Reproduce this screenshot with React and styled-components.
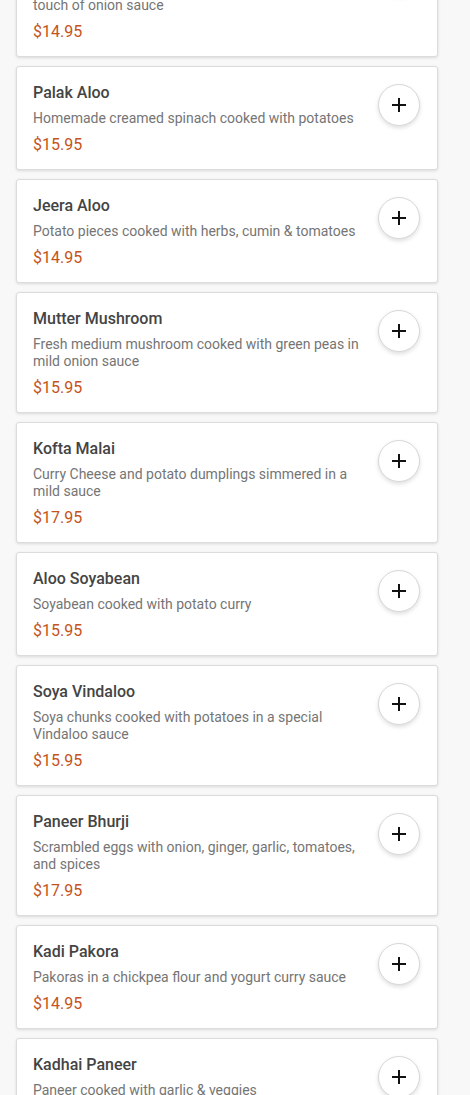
import styled, { createGlobalStyle } from "styled-components";

const GlobalStyle = createGlobalStyle`
  html, body {
    margin: 0;
    padding: 0;
    background: #f8f8f8;
    font-family: Roboto, "Liberation Sans", Arial, sans-serif;
    overflow: hidden;
  }
`;

// platos del menu
const platos = [
  { nombre: "Aloo Gobi", desc: "Cauliflower and potatoes cooked with spices and a touch of onion sauce", precio: "14.95" },
  { nombre: "Palak Aloo", desc: "Homemade creamed spinach cooked with potatoes", precio: "15.95" },
  { nombre: "Jeera Aloo", desc: "Potato pieces cooked with herbs, cumin & tomatoes", precio: "14.95" },
  { nombre: "Mutter Mushroom", desc: "Fresh medium mushroom cooked with green peas in mild onion sauce", precio: "15.95" },
  { nombre: "Kofta Malai", desc: "Curry Cheese and potato dumplings simmered in a mild sauce", precio: "17.95" },
  { nombre: "Aloo Soyabean", desc: "Soyabean cooked with potato curry", precio: "15.95" },
  { nombre: "Soya Vindaloo", desc: "Soya chunks cooked with potatoes in a special Vindaloo sauce", precio: "15.95" },
  { nombre: "Paneer Bhurji", desc: "Scrambled eggs with onion, ginger, garlic, tomatoes, and spices", precio: "17.95" },
  { nombre: "Kadi Pakora", desc: "Pakoras in a chickpea flour and yogurt curry sauce", precio: "14.95" },
  { nombre: "Kadhai Paneer", desc: "Paneer cooked with garlic & veggies", precio: "15.95" },
];

function PlusIcon() {
  return (
    <svg width="16" height="16" viewBox="0 0 16 16">
      <path d="M8 1v14M1 8h14" stroke="#111" strokeWidth="2" fill="none" />
    </svg>
  );
}

export default function App() {
  return (
    <>
      <GlobalStyle />
      <Lista>
        {platos.map((p) => (
          <Card key={p.nombre}>
            <Info>
              <Titulo>{p.nombre}</Titulo>
              <Desc>{p.desc}</Desc>
              <Precio>${p.precio}</Precio>
            </Info>
            <BtnAdd aria-label="add">
              <PlusIcon />
            </BtnAdd>
          </Card>
        ))}
      </Lista>
    </>
  );
}

const Lista = styled.div`
  display: flex;
  flex-direction: column;
  gap: 9px;
  width: 422px;
  margin: -64px 0 0 16px;
`;
const Card = styled.div`
  display: flex;
  align-items: flex-start;
  gap: 16px;
  background: #fff;
  border: 1px solid #dcdcdc;
  border-radius: 3px;
  box-shadow: 0 1px 3px rgba(0, 0, 0, 0.12);
  padding: 16px 17px 14px 16px;
`;
const Info = styled.div`
  flex: 1;
  display: flex;
  flex-direction: column;
  min-width: 0;
`;
const Titulo = styled.div`
  font-size: 16px;
  font-weight: 500;
  line-height: 20px;
  color: #444;
`;
const Desc = styled.div`
  font-size: 14px;
  line-height: 17px;
  color: #757575;
  margin-top: 7px;
`;
const Precio = styled.div`
  font-size: 16px;
  line-height: 20px;
  color: #c4531e;
  margin-top: 8px;
`;
const BtnAdd = styled.button`
  flex: none;
  width: 42px;
  height: 42px;
  margin-top: 1px;
  border-radius: 50%;
  border: 1px solid #d8d8d8;
  background: #fff;
  box-shadow: 0 2px 4px rgba(0, 0, 0, 0.13);
  display: flex;
  align-items: center;
  justify-content: center;
  padding: 0;
  cursor: pointer;
`;
